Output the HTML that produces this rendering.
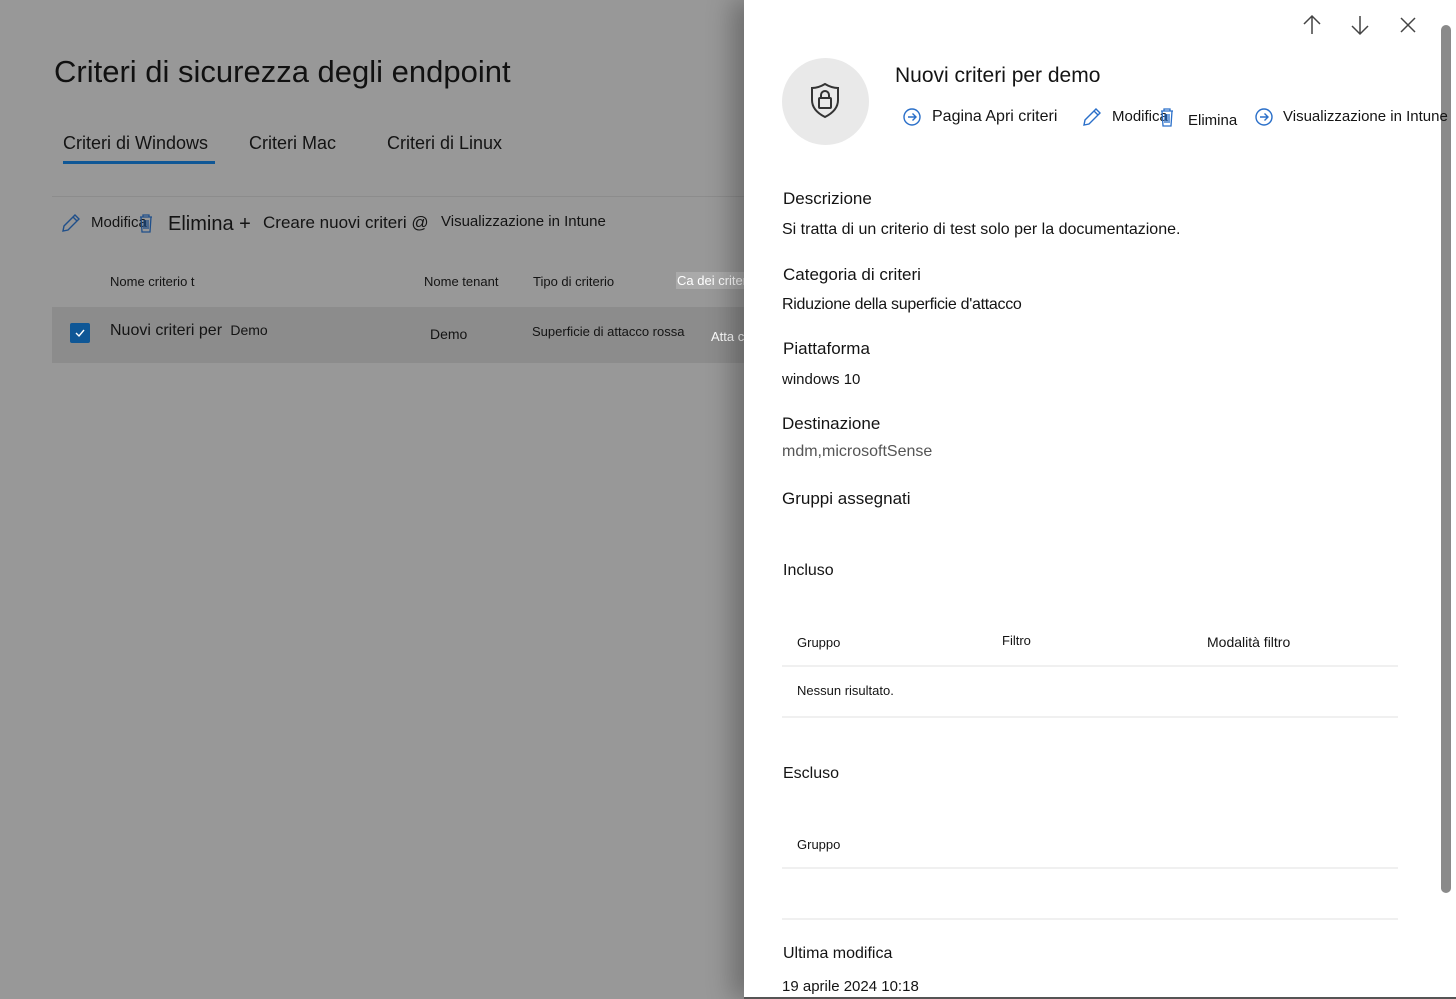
<!DOCTYPE html>
<html><head><meta charset="utf-8"><style>
*{margin:0;padding:0;box-sizing:border-box}
body{width:1456px;height:999px;overflow:hidden;background:#989898;font-family:"Liberation Sans",sans-serif;color:#141414;position:relative}
.a{position:absolute;white-space:nowrap}
.panel{position:absolute;left:744px;top:0;width:712px;height:999px;background:#fff;box-shadow:-12px 0 24px rgba(0,0,0,.28);border-bottom:2px solid #555}
.p{position:absolute;white-space:nowrap}
.hl{position:absolute;left:38px;width:616px;height:2px;background:#f0f0f0}
</style></head><body>
<div class="a" style="left:54px;top:54px;font-size:31px;color:#111">Criteri di sicurezza degli endpoint</div>
<div class="a" style="left:63px;top:133px;font-size:18px">Criteri di Windows</div>
<div class="a" style="left:63px;top:161px;width:152px;height:3px;background:#0f5796"></div>
<div class="a" style="left:249px;top:133px;font-size:18px">Criteri Mac</div>
<div class="a" style="left:387px;top:133px;font-size:18px">Criteri di Linux</div>
<div class="a" style="left:52px;top:196px;width:700px;height:1px;background:#8c8c8c"></div>
<svg class="a" style="left:60px;top:212px" width="22" height="22" viewBox="0 0 22 22"><path d="M3 19l1-5L15 3l4 4L8 18z M13 5l4 4" fill="none" stroke="#1f4f8a" stroke-width="1.4"/></svg>
<div class="a" style="left:91px;top:214px;font-size:15px">Modifica</div>
<svg class="a" style="left:138px;top:213px" width="16" height="20" viewBox="0 0 16 20"><path d="M2 4h12M5 4V2h6v2M3 4l1 15h8l1-15M6 7v9M8 7v9M10 7v9" fill="none" stroke="#1f4f8a" stroke-width="1.3"/></svg>
<div class="a" style="left:168px;top:213px;font-size:20px">Elimina +</div>
<div class="a" style="left:263px;top:213px;font-size:17px">Creare nuovi criteri @</div>
<div class="a" style="left:441px;top:213px;font-size:15px">Visualizzazione in Intune</div>
<div class="a" style="left:110px;top:274px;font-size:13px">Nome criterio t</div>
<div class="a" style="left:424px;top:274px;font-size:13px">Nome tenant</div>
<div class="a" style="left:533px;top:274px;font-size:13px">Tipo di criterio</div>
<div class="a" style="left:676px;top:272px;font-size:13px;background:#aaa;color:#fff;padding:1px 1px;width:70px;overflow:hidden">Ca dei criteri</div>
<div class="a" style="left:52px;top:307px;width:700px;height:56px;background:#8c8c8c"></div>
<div class="a" style="left:70px;top:323px;width:20px;height:20px;background:#0f5796;border-radius:2px"></div>
<svg class="a" style="left:72px;top:325px" width="16" height="16"><path d="M4 8l3 3 5-6" fill="none" stroke="#fff" stroke-width="1.4"/></svg>
<div class="a" style="left:110px;top:322px;font-size:16px">Nuovi criteri per <span style="font-size:14px">&nbsp;Demo</span></div>
<div class="a" style="left:430px;top:326px;font-size:14px">Demo</div>
<div class="a" style="left:532px;top:324px;font-size:13px">Superficie di attacco rossa</div>
<div class="a" style="left:711px;top:329px;font-size:13px;color:#fff">Atta c</div>

<div class="panel">
<svg class="p" style="left:557px;top:14px" width="22" height="22" viewBox="0 0 22 22"><path d="M11 20V2M3 10l8-8 8 8" fill="none" stroke="#444" stroke-width="1.5"/></svg>
<svg class="p" style="left:605px;top:14px" width="22" height="22" viewBox="0 0 22 22"><path d="M11 2v18M3 12l8 8 8-8" fill="none" stroke="#444" stroke-width="1.5"/></svg>
<svg class="p" style="left:655px;top:16px" width="18" height="18" viewBox="0 0 18 18"><path d="M2 2l14 14M16 2L2 16" fill="none" stroke="#444" stroke-width="1.5"/></svg>
<div class="p" style="left:697px;top:25px;width:10px;height:868px;background:#8a8a8a;border-radius:5px"></div>
<div class="p" style="left:38px;top:58px;width:87px;height:87px;border-radius:50%;background:#e9e9e9"></div>
<svg class="p" style="left:63px;top:81px" width="36" height="40" viewBox="0 0 36 40"><path d="M18 3c5 3 9 4 13 4v12c0 9-7 14-13 17C12 33 5 28 5 19V7c4 0 8-1 13-4z" fill="none" stroke="#333" stroke-width="2"/><rect x="12" y="17" width="12" height="10" rx="1" fill="none" stroke="#333" stroke-width="2"/><path d="M14 17v-3a4 4 0 018 0v3" fill="none" stroke="#333" stroke-width="2"/></svg>
<div class="p" style="left:151px;top:64px;font-size:21px">Nuovi criteri per demo</div>
<svg class="p" style="left:158px;top:107px" width="20" height="20"><circle cx="10" cy="10" r="8" fill="none" stroke="#2a6fc9" stroke-width="1.4"/><path d="M6 10h8M10.5 6.5L14 10l-3.5 3.5" fill="none" stroke="#2a6fc9" stroke-width="1.4"/></svg>
<div class="p" style="left:188px;top:108px;font-size:16px">Pagina Apri criteri</div>
<svg class="p" style="left:337px;top:106px" width="22" height="22" viewBox="0 0 22 22"><path d="M3 19l1-5L15 3l4 4L8 18z M13 5l4 4" fill="none" stroke="#2a6fc9" stroke-width="1.4"/></svg>
<div class="p" style="left:368px;top:108px;font-size:15px">Modifica</div>
<svg class="p" style="left:415px;top:107px" width="16" height="20" viewBox="0 0 16 20"><path d="M2 4h12M5 4V2h6v2M3 4l1 15h8l1-15M6 7v9M8 7v9M10 7v9" fill="none" stroke="#2a6fc9" stroke-width="1.3"/></svg>
<div class="p" style="left:444px;top:112px;font-size:15px">Elimina</div>
<svg class="p" style="left:510px;top:107px" width="20" height="20"><circle cx="10" cy="10" r="8" fill="none" stroke="#2a6fc9" stroke-width="1.4"/><path d="M6 10h8M10.5 6.5L14 10l-3.5 3.5" fill="none" stroke="#2a6fc9" stroke-width="1.4"/></svg>
<div class="p" style="left:539px;top:108px;font-size:15px">Visualizzazione in Intune</div>
<div class="p" style="left:39px;top:189px;font-size:17px">Descrizione</div>
<div class="p" style="left:38px;top:221px;font-size:16px">Si tratta di un criterio di test solo per la documentazione.</div>
<div class="p" style="left:39px;top:265px;font-size:17px">Categoria di criteri</div>
<div class="p" style="left:38px;top:296px;font-size:16px;letter-spacing:-.3px">Riduzione della superficie d'attacco</div>
<div class="p" style="left:39px;top:339px;font-size:17px">Piattaforma</div>
<div class="p" style="left:38px;top:371px;font-size:15px">windows 10</div>
<div class="p" style="left:38px;top:414px;font-size:17px">Destinazione</div>
<div class="p" style="left:38px;top:443px;font-size:16px;color:#555">mdm,microsoftSense</div>
<div class="p" style="left:38px;top:489px;font-size:17px">Gruppi assegnati</div>
<div class="p" style="left:39px;top:562px;font-size:16px">Incluso</div>
<div class="p" style="left:53px;top:635px;font-size:13px">Gruppo</div>
<div class="p" style="left:258px;top:633px;font-size:13px">Filtro</div>
<div class="p" style="left:463px;top:634px;font-size:14px">Modalità filtro</div>
<div class="hl" style="top:665px"></div>
<div class="p" style="left:53px;top:683px;font-size:13px">Nessun risultato.</div>
<div class="hl" style="top:716px"></div>
<div class="p" style="left:39px;top:765px;font-size:16px">Escluso</div>
<div class="p" style="left:53px;top:837px;font-size:13px">Gruppo</div>
<div class="hl" style="top:867px"></div>
<div class="hl" style="top:918px"></div>
<div class="p" style="left:39px;top:945px;font-size:16px">Ultima modifica</div>
<div class="p" style="left:38px;top:978px;font-size:15px">19 aprile 2024 10:18</div>
</div>
</body></html>
